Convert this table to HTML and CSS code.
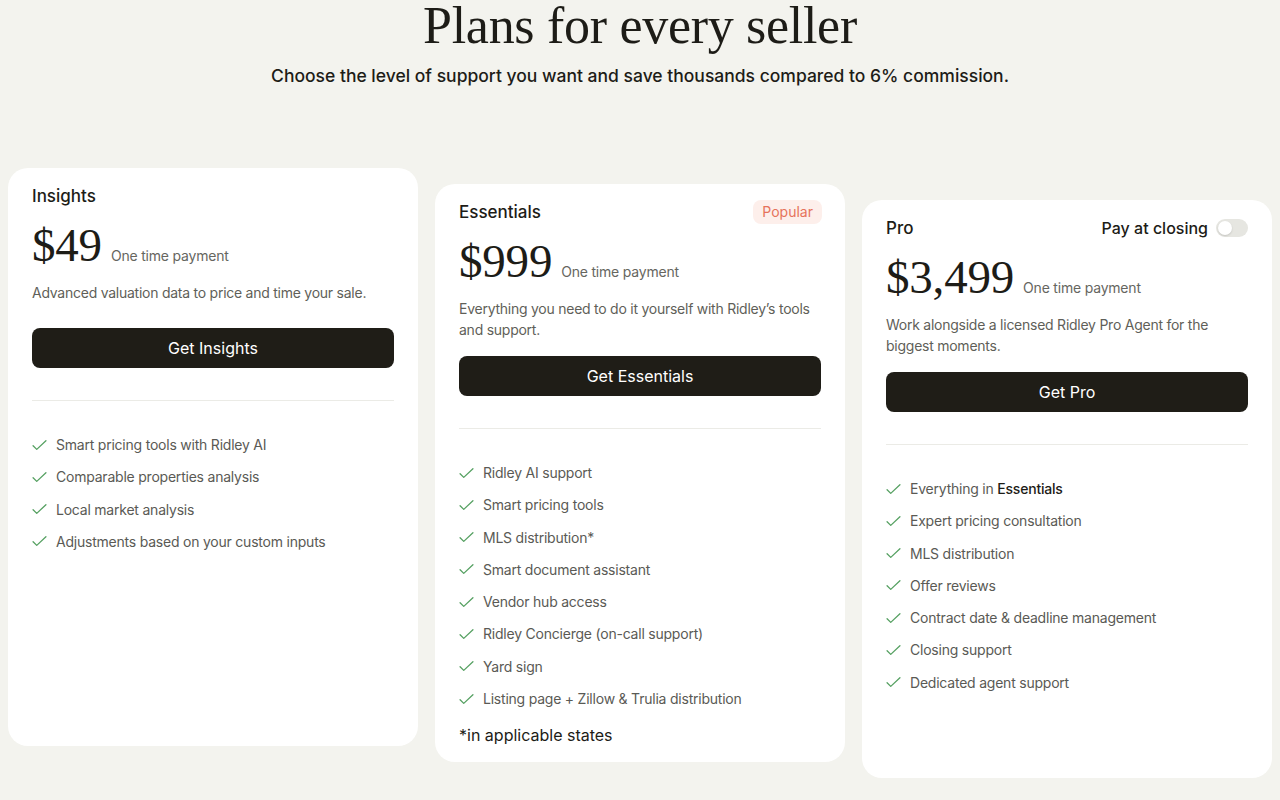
FILE: index.html
```html
<!DOCTYPE html>
<html lang="en">
<head>
<meta charset="utf-8">
<title>Plans for every seller</title>
<link rel="stylesheet" href="styles.css">
</head>
<body>
<main class="page">
  <header class="hero">
    <h1 class="hero-title">Plans for every seller</h1>
    <p class="hero-sub">Choose the level of support you want and save thousands compared to 6% commission.</p>
  </header>

  <section class="plans">
    <article class="card card--first">
      <div class="card-head">
        <h2 class="card-name">Insights</h2>
      </div>
      <div class="price-row"><span class="price">$49</span><span class="price-note">One time payment</span></div>
      <p class="desc desc--single">Advanced valuation data to price and time your sale.</p>
      <button class="cta">Get Insights</button>
      <hr class="divider">
      <ul class="features">
        <li class="feature"><svg class="check" viewBox="0 0 16 12"><path d="M1 6.2 L5 10.2 L15 0.8"/></svg>Smart pricing tools with Ridley AI</li>
        <li class="feature"><svg class="check" viewBox="0 0 16 12"><path d="M1 6.2 L5 10.2 L15 0.8"/></svg>Comparable properties analysis</li>
        <li class="feature"><svg class="check" viewBox="0 0 16 12"><path d="M1 6.2 L5 10.2 L15 0.8"/></svg>Local market analysis</li>
        <li class="feature"><svg class="check" viewBox="0 0 16 12"><path d="M1 6.2 L5 10.2 L15 0.8"/></svg>Adjustments based on your custom inputs</li>
      </ul>
    </article>

    <article class="card card--second">
      <div class="card-head">
        <h2 class="card-name">Essentials</h2>
        <span class="badge">Popular</span>
      </div>
      <div class="price-row"><span class="price">$999</span><span class="price-note">One time payment</span></div>
      <p class="desc">Everything you need to do it yourself with Ridley’s tools and support.</p>
      <button class="cta">Get Essentials</button>
      <hr class="divider">
      <ul class="features">
        <li class="feature"><svg class="check" viewBox="0 0 16 12"><path d="M1 6.2 L5 10.2 L15 0.8"/></svg>Ridley AI support</li>
        <li class="feature"><svg class="check" viewBox="0 0 16 12"><path d="M1 6.2 L5 10.2 L15 0.8"/></svg>Smart pricing tools</li>
        <li class="feature"><svg class="check" viewBox="0 0 16 12"><path d="M1 6.2 L5 10.2 L15 0.8"/></svg>MLS distribution*</li>
        <li class="feature"><svg class="check" viewBox="0 0 16 12"><path d="M1 6.2 L5 10.2 L15 0.8"/></svg>Smart document assistant</li>
        <li class="feature"><svg class="check" viewBox="0 0 16 12"><path d="M1 6.2 L5 10.2 L15 0.8"/></svg>Vendor hub access</li>
        <li class="feature"><svg class="check" viewBox="0 0 16 12"><path d="M1 6.2 L5 10.2 L15 0.8"/></svg>Ridley Concierge (on-call support)</li>
        <li class="feature"><svg class="check" viewBox="0 0 16 12"><path d="M1 6.2 L5 10.2 L15 0.8"/></svg>Yard sign</li>
        <li class="feature"><svg class="check" viewBox="0 0 16 12"><path d="M1 6.2 L5 10.2 L15 0.8"/></svg>Listing page + Zillow &amp; Trulia distribution</li>
      </ul>
      <p class="footnote">*in applicable states</p>
    </article>

    <article class="card card--third">
      <div class="card-head">
        <h2 class="card-name">Pro</h2>
        <label class="closing">Pay at closing <span class="toggle"><span class="knob"></span></span></label>
      </div>
      <div class="price-row"><span class="price">$3,499</span><span class="price-note">One time payment</span></div>
      <p class="desc">Work alongside a licensed Ridley Pro Agent for the biggest moments.</p>
      <button class="cta">Get Pro</button>
      <hr class="divider">
      <ul class="features">
        <li class="feature"><svg class="check" viewBox="0 0 16 12"><path d="M1 6.2 L5 10.2 L15 0.8"/></svg><span>Everything in <strong class="strong">Essentials</strong></span></li>
        <li class="feature"><svg class="check" viewBox="0 0 16 12"><path d="M1 6.2 L5 10.2 L15 0.8"/></svg>Expert pricing consultation</li>
        <li class="feature"><svg class="check" viewBox="0 0 16 12"><path d="M1 6.2 L5 10.2 L15 0.8"/></svg>MLS distribution</li>
        <li class="feature"><svg class="check" viewBox="0 0 16 12"><path d="M1 6.2 L5 10.2 L15 0.8"/></svg>Offer reviews</li>
        <li class="feature"><svg class="check" viewBox="0 0 16 12"><path d="M1 6.2 L5 10.2 L15 0.8"/></svg>Contract date &amp; deadline management</li>
        <li class="feature"><svg class="check" viewBox="0 0 16 12"><path d="M1 6.2 L5 10.2 L15 0.8"/></svg>Closing support</li>
        <li class="feature"><svg class="check" viewBox="0 0 16 12"><path d="M1 6.2 L5 10.2 L15 0.8"/></svg>Dedicated agent support</li>
      </ul>
    </article>
  </section>
</main>
</body>
</html>
```

FILE: styles.css
```css
* { box-sizing: border-box; }

html, body {
  margin: 0;
  background: #f3f3ee;
}

body {
  font-family: Inter, "Noto Sans", "Liberation Sans", sans-serif;
  color: #1d1c17;
  -webkit-font-smoothing: antialiased;
}

.page {
  padding: 0 8px;
}

.hero {
  text-align: center;
}

.hero-title {
  margin: 0;
  font-family: "Liberation Serif", "DejaVu Serif", serif;
  font-weight: 400;
  font-size: 52px;
  line-height: 52px;
  letter-spacing: -0.3px;
  color: #1d1c17;
}

.hero-sub {
  margin: 12px 0 0;
  font-size: 17.5px;
  line-height: 24px;
  font-weight: 500;
  color: #1d1c17;
}

.plans {
  margin-top: 80px;
  display: grid;
  grid-template-columns: repeat(3, 410px);
  column-gap: 17px;
  align-items: stretch;
}

.card {
  background: #ffffff;
  border-radius: 20px;
  padding: 16px 24px 15px;
  display: flex;
  flex-direction: column;
}

.card--first { margin-bottom: 32px; }
.card--second { margin-top: 16px; margin-bottom: 16px; }
.card--third { margin-top: 32px; }

.card-head {
  display: flex;
  align-items: center;
  justify-content: space-between;
  height: 24px;
}

.card-name {
  margin: 0;
  font-size: 17px;
  line-height: 24px;
  font-weight: 500;
  color: #1d1c17;
}

.badge {
  font-size: 14px;
  line-height: 24px;
  padding: 0 9px;
  border-radius: 8px;
  background: #fdefeb;
  color: #e6735b;
  margin-right: -1px;
}

.closing {
  display: flex;
  align-items: center;
  gap: 8px;
  font-size: 16px;
  font-weight: 500;
  color: #1d1c17;
}

.toggle {
  width: 32px;
  height: 18px;
  border-radius: 9px;
  background: #e6e6e1;
  padding: 2px;
  display: flex;
}

.knob {
  width: 14px;
  height: 14px;
  border-radius: 50%;
  background: #ffffff;
  box-shadow: 0 1px 2px rgba(0,0,0,0.15);
}

.price-row {
  margin-top: 12px;
  display: flex;
  align-items: baseline;
  gap: 9px;
  height: 50px;
}

.price {
  font-family: "Liberation Serif", "DejaVu Serif", serif;
  font-size: 47px;
  line-height: 50px;
  letter-spacing: -0.2px;
  color: #1d1c17;
}

.price-note {
  font-size: 14px;
  letter-spacing: -0.2px;
  color: #66665f;
}

.desc {
  margin: 12px 0 16px;
  font-size: 14px;
  line-height: 21px;
  letter-spacing: -0.25px;
  color: #5f5f59;
}

.desc--single { margin-bottom: 25px; }

.cta {
  display: block;
  width: 100%;
  height: 40px;
  border: 0;
  border-radius: 8px;
  background: #1f1d17;
  color: #ffffff;
  font-family: inherit;
  font-size: 16px;
  cursor: pointer;
}

.divider {
  margin: 32px 0 0;
  border: 0;
  height: 1px;
  background: #ebebe6;
}

.features {
  list-style: none;
  margin: 34px 0 0;
  padding: 0;
  display: flex;
  flex-direction: column;
  gap: 12.3px;
}

.feature {
  display: flex;
  align-items: center;
  gap: 9px;
  font-size: 14px;
  line-height: 20px;
  letter-spacing: -0.22px;
  color: #5a5a55;
}

.strong {
  font-weight: 500;
  color: #1d1c17;
}

.check {
  width: 15px;
  height: 11px;
  flex: none;
  fill: none;
  stroke: #55a061;
  stroke-width: 1.4;
  stroke-linecap: round;
  stroke-linejoin: round;
}

.footnote {
  margin: 14px 0 0;
  font-size: 16px;
  line-height: 24px;
  color: #1d1c17;
}
```
